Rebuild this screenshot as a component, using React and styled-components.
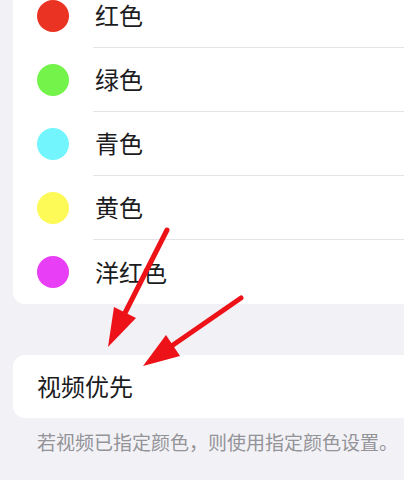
import React from 'react';
import styled, { createGlobalStyle } from 'styled-components';

const GlobalStyle = createGlobalStyle`
  html, body {
    margin: 0;
    padding: 0;
    background: #f2f1f6;
    overflow: hidden;
  }
  body {
    font-family: "Noto Sans CJK SC", "Noto Sans", sans-serif;
  }
`;

const Page = styled.div`
  position: relative;
  width: 404px;
  height: 480px;
  overflow: hidden;
  background: #f2f1f6;
`;

const Card = styled.div`
  background: #ffffff;
  border-radius: 12px;
  margin: ${(props) => props.margin};
  margin-right: -20px;
`;

const Row = styled.div`
  display: flex;
  align-items: center;
  height: 64px;
  padding-left: 24px;
`;

const Dot = styled.span`
  flex: none;
  width: 32px;
  height: 32px;
  border-radius: 50%;
  background: ${(props) => props.color};
  margin-right: 24px;
`;

const Label = styled.div`
  flex: 1;
  height: 100%;
  display: flex;
  align-items: center;
  padding-left: 2px;
  font-size: 24px;
  line-height: 1.2;
  color: #1c1c1e;
  border-bottom: ${(props) => (props.last ? 'none' : '1px solid #e4e4e8')};
  box-sizing: border-box;
`;

const PlainRow = styled.div`
  display: flex;
  align-items: center;
  height: 63px;
  padding-left: 24px;
  font-size: 24px;
  line-height: 1.2;
  color: #1c1c1e;
`;

const Footnote = styled.div`
  padding: 12px 0 0 37px;
  font-size: 19px;
  line-height: 1.3;
  color: #939398;
  white-space: nowrap;
`;

const Arrows = styled.svg`
  position: absolute;
  left: 0;
  top: 0;
  pointer-events: none;
`;

const colors = [
  { name: '红色', color: '#eb3323' },
  { name: '绿色', color: '#74f44a' },
  { name: '青色', color: '#72f5fd' },
  { name: '黄色', color: '#fdfa57' },
  { name: '洋红色', color: '#e83ef5' },
];

const App = () => (
  <Page>
    <GlobalStyle />
    <Card margin="-16px 0 0 13px">
      {colors.map((c, i) => (
        <Row key={c.name}>
          <Dot color={c.color} />
          <Label last={i === colors.length - 1}>{c.name}</Label>
        </Row>
      ))}
    </Card>
    <Card margin="51px 0 0 13px">
      <PlainRow>视频优先</PlainRow>
    </Card>
    <Footnote>若视频已指定颜色，则使用指定颜色设置。</Footnote>

    <Arrows width="404" height="480" viewBox="0 0 404 480">
      <g stroke="#ec1218" strokeWidth="5" strokeLinecap="round">
        <line x1="167" y1="230" x2="125" y2="313" />
        <line x1="241" y1="298" x2="173" y2="345" />
      </g>
      <g fill="#ec1218">
        <polygon points="108,347 136,318 114,307" />
        <polygon points="143,366 180,356 166,335" />
      </g>
    </Arrows>
  </Page>
);

export default App;
